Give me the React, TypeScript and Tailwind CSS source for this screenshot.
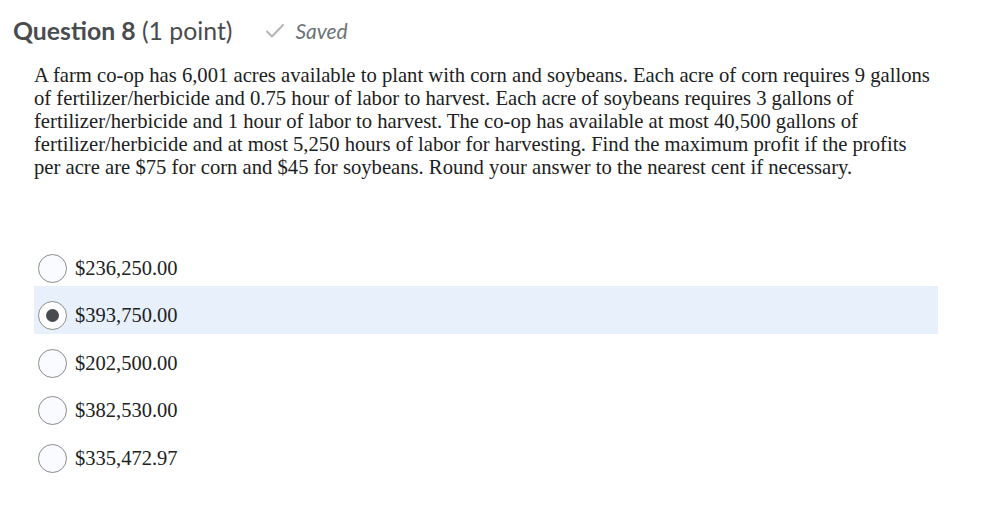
import React, { useState } from 'react';

const options = ['$236,250.00', '$393,750.00', '$202,500.00', '$382,530.00', '$335,472.97'];

const App: React.FC = () => {
  const [selected, setSelected] = useState(1);

  return (
    <div className="min-h-screen w-full bg-white">
      <div className="px-[13px] pt-[15px] flex items-center gap-[33px] font-[family-name:Lato,sans-serif] text-[#494c4e]">
        <h2 className="text-[24.8px] leading-[30px]">
          <span className="font-bold">Question 8</span> (1 point)
        </h2>
        <div className="flex items-center gap-[10px] text-[#6e7376]">
          <svg width="20" height="16" viewBox="0 0 20 16" fill="none">
            <path d="M2 8.5 L7 13.5 L18 2" stroke="#b3b6b8" strokeWidth="2" strokeLinecap="round" strokeLinejoin="round" />
          </svg>
          <span className="italic text-[21px]">Saved</span>
        </div>
      </div>

      <p className="ml-[34px] w-[899px] mt-[17px] font-[family-name:Liberation_Serif,serif] text-[20.65px] leading-[23px] text-[#202122]">
        A farm co-op has 6,001 acres available to plant with corn and soybeans. Each acre of corn requires 9 gallons
        of fertilizer/herbicide and 0.75 hour of labor to harvest. Each acre of soybeans requires 3 gallons of
        fertilizer/herbicide and 1 hour of labor to harvest. The co-op has available at most 40,500 gallons of
        fertilizer/herbicide and at most 5,250 hours of labor for harvesting. Find the maximum profit if the profits
        per acre are $75 for corn and $45 for soybeans. Round your answer to the nearest cent if necessary.
      </p>

      <div className="mt-[60px] ml-[34px] w-[904px]">
        {options.map((o, i) => (
          <label
            key={o}
            onClick={() => setSelected(i)}
            className={`flex items-center h-[47.5px] pt-[12px] pl-[4px] gap-[8px] cursor-pointer ${
              i === selected ? 'bg-[#e8f1fb]' : ''
            }`}
          >
            <span
              className={`flex items-center justify-center w-[29px] h-[29px] rounded-full border border-[#8a8c8e] ${
                i === selected ? 'bg-white' : 'bg-[#f9fbfe]'
              }`}
            >
              {i === selected && <span className="w-[13px] h-[13px] rounded-full bg-[#494c4e]" />}
            </span>
            <span className="font-[family-name:Liberation_Serif,serif] text-[20.5px] text-[#202122]">{o}</span>
          </label>
        ))}
      </div>
    </div>
  );
};

export default App;
